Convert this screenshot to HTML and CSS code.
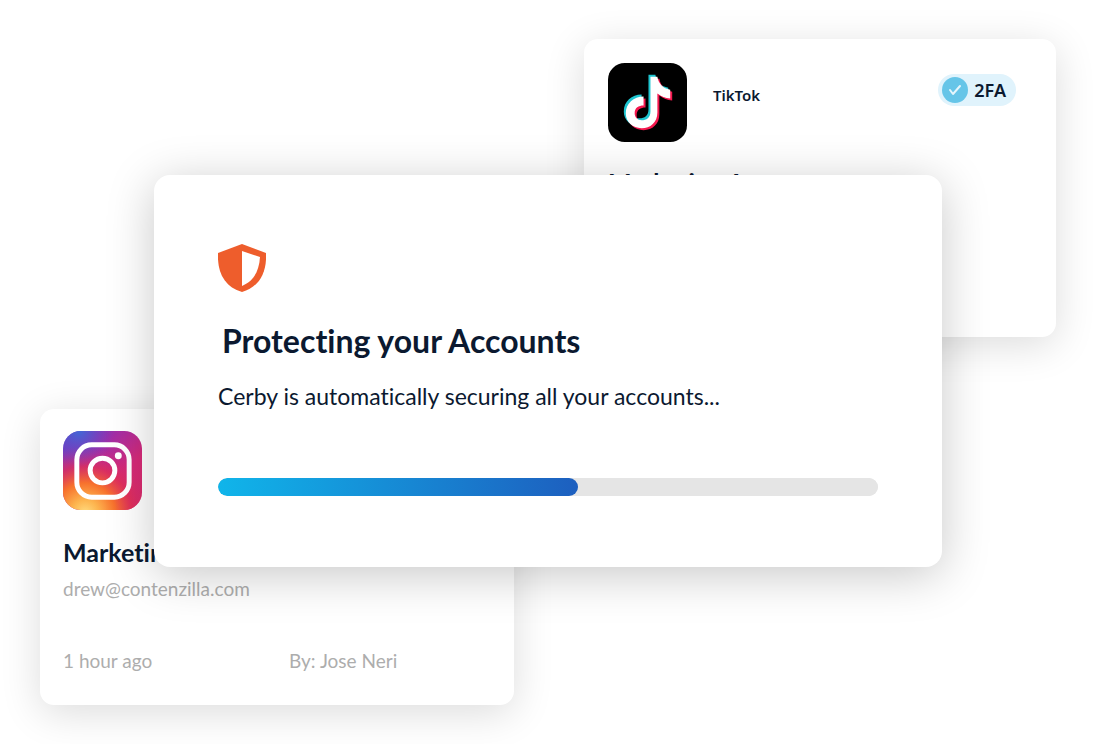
FILE: index.html
```html
<!DOCTYPE html>
<html lang="en">
<head>
<meta charset="utf-8">
<meta name="viewport" content="width=device-width, initial-scale=1">
<title>Protecting your Accounts</title>
<link rel="stylesheet" href="styles.css">
</head>
<body>
<main class="stage">
  <article class="card card-tiktok">
    <header class="card-head">
      <svg class="app-icon" viewBox="0 0 80 80" role="img" aria-label="TikTok logo">
        <defs>
          <path id="note" d="M42 13h7c1 7 6 12 13 13v9c-5 0-9-2-13-5v19c0 10-7 16-16 16s-16-6-16-15c0-10 8-17 18-17v9c-5 0-9 2-9 8 0 4 3 7 7 7 5 0 9-3 9-9z"/>
        </defs>
        <rect width="80" height="80" rx="17" fill="#000"/>
        <use href="#note" x="-1" y="-1" fill="#1ec5d0"/>
        <use href="#note" x="3" y="3" fill="#f5184f"/>
        <use href="#note" x="1" y="1" fill="#fff"/>
      </svg>
      <h2 class="app-name">TikTok</h2>
      <span class="badge">
        <svg class="badge-icon" viewBox="0 0 26 26" aria-hidden="true">
          <circle cx="13" cy="13" r="13" fill="#66c5e8"/>
          <path d="M8 13l3 4 7-8" fill="none" stroke="#e6f6fc" stroke-width="2" stroke-linecap="round" stroke-linejoin="round"/>
        </svg>
        2FA
      </span>
    </header>
    <h3 class="card-title">Marketing Account</h3>
  </article>

  <article class="card card-instagram">
    <svg class="app-icon" viewBox="0 0 80 80" role="img" aria-label="Instagram logo">
      <defs>
        <linearGradient id="ig-base" x1="0" y1="0" x2="1" y2="1">
          <stop offset="0" stop-color="#5b45cc"/>
          <stop offset=".35" stop-color="#a42da5"/>
          <stop offset=".65" stop-color="#d62a78"/>
          <stop offset="1" stop-color="#d92c68"/>
        </linearGradient>
        <radialGradient id="ig-warm" cx=".28" cy="1.04" r=".85">
          <stop offset="0" stop-color="#ffdc80"/>
          <stop offset=".2" stop-color="#fdb44e"/>
          <stop offset=".45" stop-color="#f7712d"/>
          <stop offset=".7" stop-color="#e12f55" stop-opacity=".75"/>
          <stop offset="1" stop-color="#d62a78" stop-opacity="0"/>
        </radialGradient>
        <radialGradient id="ig-cool" cx=".2" cy="0" r=".45">
          <stop offset="0" stop-color="#4268d6"/>
          <stop offset="1" stop-color="#6b3fc4" stop-opacity="0"/>
        </radialGradient>
      </defs>
      <rect width="80" height="80" rx="18" fill="url(#ig-base)"/>
      <rect width="80" height="80" rx="18" fill="url(#ig-warm)"/>
      <rect width="80" height="80" rx="18" fill="url(#ig-cool)"/>
      <rect x="14" y="14" width="53" height="53" rx="15" fill="none" stroke="#fff" stroke-width="5"/>
      <circle cx="40" cy="40" r="12.500" fill="none" stroke="#fff" stroke-width="5"/>
      <circle cx="56" cy="25" r="3.500" fill="#fff"/>
    </svg>
    <h3 class="card-title">Marketing Account</h3>
    <p class="email">drew@contenzilla.com</p>
    <div class="meta">
      <span>1 hour ago</span>
      <span>By: Jose Neri</span>
    </div>
  </article>

  <section class="card card-main">
    <svg class="shield" viewBox="0 0 48 48" aria-hidden="true">
      <path fill="#ee5d2c" d="M24 0l24 9c1 20-7 34-24 39C7 43-1 29 0 9z"/>
      <path fill="#fff" d="M24 7l18 6c-1 14-6 24-18 29z"/>
    </svg>
    <h1 class="heading">Protecting your Accounts</h1>
    <label class="status" for="progress">Cerby is automatically securing all your accounts...</label>
    <progress class="progress" id="progress" value="54.500" max="100"></progress>
  </section>
</main>
</body>
</html>
```
FILE: styles.css
```css
* {
  box-sizing: border-box;
}

body {
  margin: 0;
  background: #fff;
  color: #0b1930;
  font-family: Lato, "Open Sans", sans-serif;
  font-variant-ligatures: none;
}

h1, h2, h3, p {
  margin: 0;
}

/* The three cards share one grid and overlap by their line numbers. */
.stage {
  display: grid;
  grid-template-columns: 114fr 360fr 70fr 358fr 114fr;
  grid-template-rows: 136px 162px 72px 158px 138px;
  min-height: 100vh;
  padding: 39px 40px;
}

.card {
  display: flex;
  flex-direction: column;
  min-width: 0;
  background: #fff;
  border-radius: 14px;
  box-shadow: 0 8px 40px rgba(0, 0, 0, 0.14);
}

.card-tiktok {
  grid-area: 1 / 4 / 3 / 6;
  gap: 24px;
  padding: 24px 40px 24px 24px;
}

.card-instagram {
  grid-area: 4 / 1 / 6 / 3;
  padding: 22px 23px;
}

.card-main {
  grid-area: 2 / 2 / 5 / 5;
  z-index: 1;
  padding: 69px 64px;
  border-radius: 16px;
  box-shadow: 0 8px 48px rgba(0, 0, 0, 0.22);
}

.card-head {
  display: flex;
  align-items: flex-start;
}

.app-icon {
  flex: none;
  width: 79px;
  height: 79px;
}

.app-name {
  margin: 21px auto 0 26px;
  font-family: "Noto Sans", sans-serif;
  font-size: 15px;
  font-weight: 600;
  line-height: 22px;
}

.badge {
  display: flex;
  align-items: center;
  gap: 6px;
  margin-top: 11px;
  padding: 3px 10px 3px 4px;
  border-radius: 16px;
  background: #e0f3fc;
  font-family: "Noto Sans", sans-serif;
  font-size: 18px;
  font-weight: 600;
  line-height: 26px;
}

.badge-icon {
  width: 26px;
  height: 26px;
}

.card-title {
  font-size: 25px;
  font-weight: 700;
  line-height: 32px;
}

.card-instagram .card-title {
  margin-top: 26px;
}

.email,
.meta {
  color: #adadad;
  font-size: 19px;
  line-height: 24px;
}

.email {
  margin-top: 9px;
}

.meta {
  display: grid;
  grid-template-columns: 226fr 202fr;
  margin-top: 48px;
}

.shield {
  width: 48px;
  height: 48px;
}

.heading {
  margin: 29px 4px 0;
  font-size: 32px;
  font-weight: 700;
  line-height: 40px;
}

.status {
  margin-top: 20px;
  font-size: 23px;
  line-height: 30px;
}

.progress {
  width: 100%;
  height: 18px;
  margin-top: 67px;
  appearance: none;
  border: 0;
  border-radius: 9px;
  background: #e5e5e5;
  overflow: hidden;
}

.progress::-webkit-progress-bar {
  border-radius: 9px;
  background: #e5e5e5;
}

.progress::-webkit-progress-value {
  border-radius: 9px;
  background: linear-gradient(90deg, #10b5ea, #1d5fbf);
}
```
